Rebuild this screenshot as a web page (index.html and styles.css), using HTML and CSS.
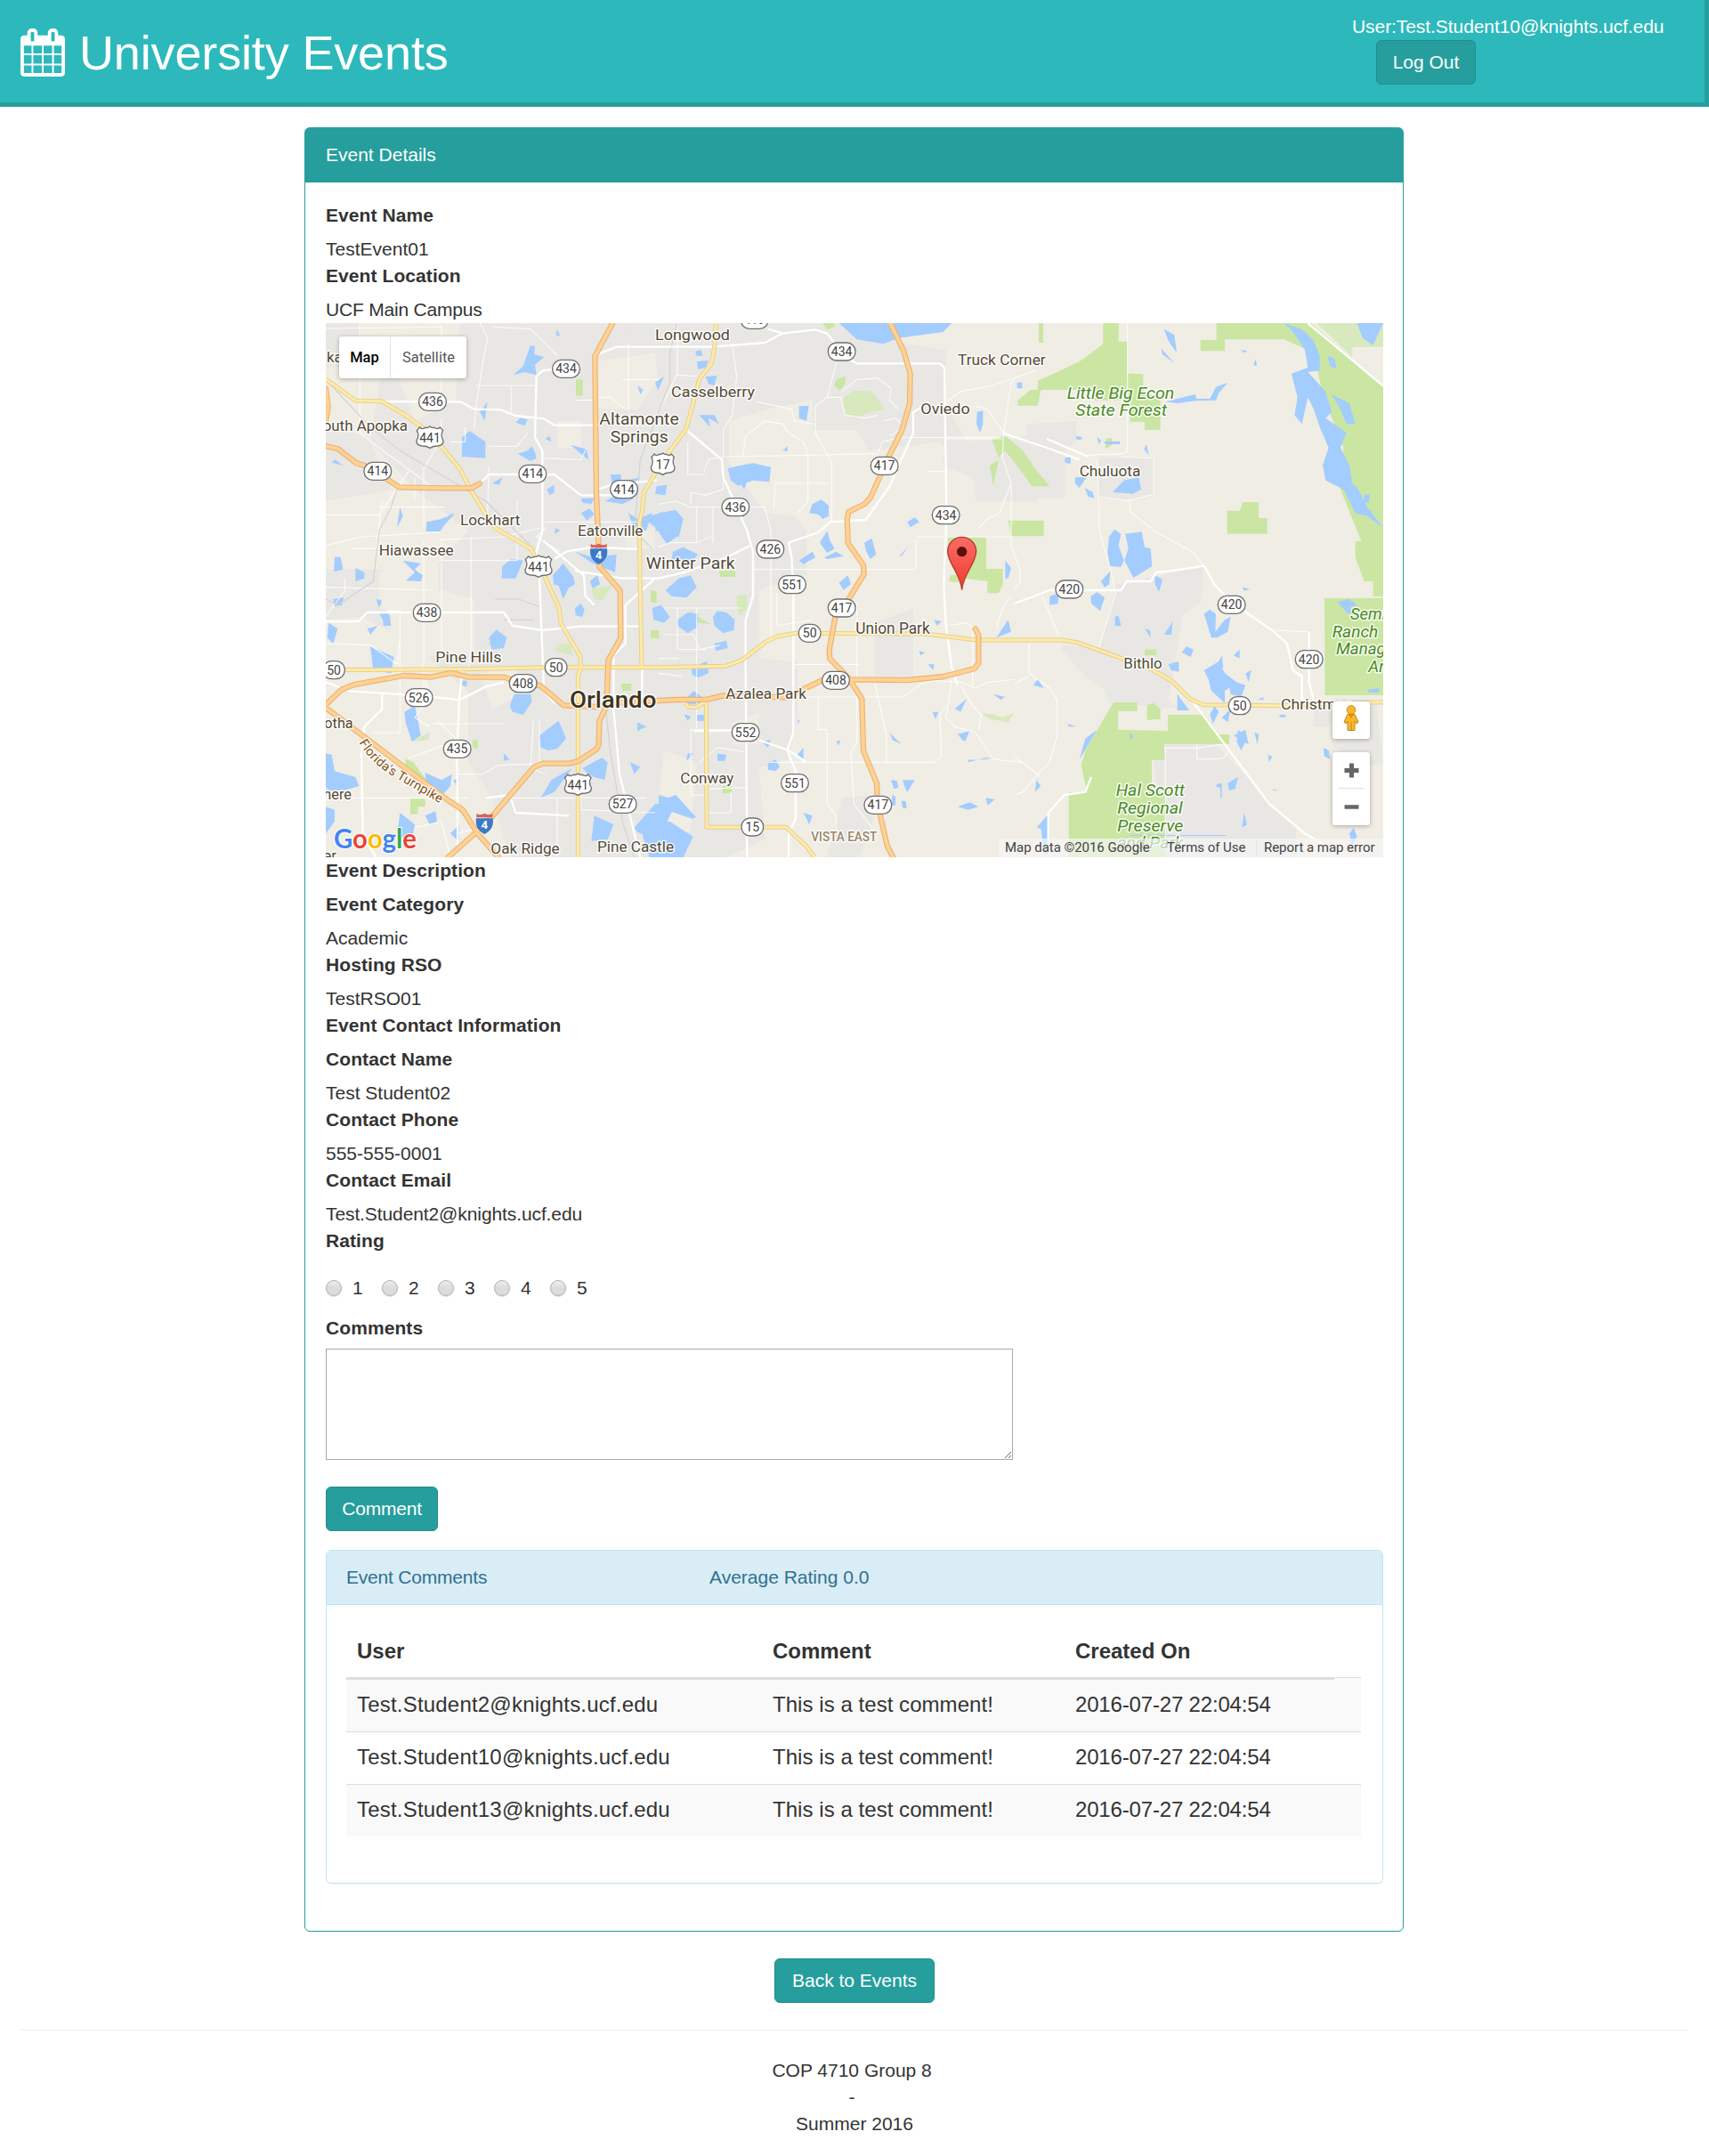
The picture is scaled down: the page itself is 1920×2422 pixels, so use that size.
FILE: index.html
```html
<!DOCTYPE html>
<html lang="en">
<head>
<meta charset="utf-8">
<title>University Events</title>
<link rel="stylesheet" href="styles.css">
</head>
<body>
<header class="topbar">
  <h1 class="brand">
    <svg class="brand-icon" viewBox="64 0 1664 1792" aria-hidden="true"><path fill="currentColor" d="M192 1664h288v-288h-288v288zm352 0h320v-288h-320v288zm-352-352h288v-320h-288v320zm352 0h320v-320h-320v320zm-352-384h288v-288h-288v288zm736 736h320v-288h-320v288zm-384-736h320v-288h-320v288zm768 736h288v-288h-288v288zm-384-352h320v-320h-320v320zm-352-864v-288q0-13-9.500-22.500t-22.500-9.500h-64q-13 0-22.500 9.500t-9.500 22.500v288q0 13 9.500 22.500t22.500 9.500h64q13 0 22.500-9.500t9.500-22.500zm736 864h288v-320h-288v320zm-384-384h320v-288h-320v288zm384 0h288v-288h-288v288zm32-480v-288q0-13-9.500-22.500t-22.500-9.500h-64q-13 0-22.500 9.500t-9.500 22.500v288q0 13 9.500 22.500t22.500 9.500h64q13 0 22.500-9.500t9.500-22.500zm384-64v1280q0 52-38 90t-90 38h-1408q-52 0-90-38t-38-90v-1280q0-52 38-90t90-38h128v-96q0-66 47-113t113-47h64q66 0 113 47t47 113v96h384v-96q0-66 47-113t113-47h64q66 0 113 47t47 113v96h128q52 0 90 38t38 90z"/></svg>
    <span>University Events</span>
  </h1>
  <div class="account">
    <div>User:Test.Student10@knights.ucf.edu</div>
    <button class="btn btn-logout">Log Out</button>
  </div>
</header>

<main>
<section class="panel">
  <div class="panel-heading">Event Details</div>
  <div class="panel-body">
    <div class="label">Event Name</div>
    <div>TestEvent01</div>
    <div class="label">Event Location</div>
    <div class="tight">UCF Main Campus</div>

    <div class="map">
      <svg class="map-canvas" viewBox="0 0 3564 1800" aria-label="Map of Orlando">
        <rect width="3564" height="1800" fill="#f0ede4"/>
        <!-- built-up areas -->
        <g class="urban">
          <path d="M450 0H1750L1960 70L2090 90V280L2180 430L2400 400V600H2190V540L2070 400L1830 430L1790 360H1640V260L1490 290L1360 330V470L1480 640L1580 650L1620 700V850L1460 900V1130L1590 1140V1330L1560 1470L1460 1500L1480 1740L1350 1800H620L560 1600L480 1480V1240L260 1060L120 990L0 1000V830H360L480 700L300 560L150 400L190 140H450Z"/>
          <path d="M0 0H120V150H0ZM0 350L140 380L220 560L0 600ZM850 920H1180V1300H850ZM2360 340L2530 330V400L2490 430V590H2400L2380 500ZM1850 1010L1980 960V1190H1850ZM2090 400L2320 390L2420 360V480L2280 560L2080 480ZM1740 1600L1850 1590V1660L1800 1800H1690Z"/>
          <path d="M2605 450L2790 450V580L2740 597L2600 590ZM2664 880L2960 820L2950 940L2890 980L2840 1270L2880 1300L2640 1280L2620 1230L2560 1190L2480 1100L2485 1085L2606 1095ZM2790 1480L2830 1420H3000L3170 1600L3270 1700V1800H2830ZM3330 1290L3540 1280L3564 1480L3490 1500L3390 1420V1360H3330Z"/>
        </g>
        <g class="rural">
          <path d="M190 0H440V260L300 330L250 200ZM300 760L380 820V960L340 1010L180 960V840ZM390 900L500 930V1120H220V980ZM100 1290L260 1240V1440L460 1530V1650L340 1800H200L60 1500ZM910 130L1110 100L1120 190L1050 290H920ZM520 1180L640 1160V1260L560 1300ZM1140 1440L1250 1480L1230 1700L1180 1800H1100ZM780 330H860V420H780ZM1010 700L1110 690V760H1010ZM1370 1350L1460 1310V1420H1370Z"/>
        </g>
        <!-- parks and preserves -->
        <g class="park">
          <path d="M2400 195L2540 130L2620 70V0H2672V62H2702V170L2755 172V225L2813 260V360H2760V333H2710V260H2590V225H2400ZM2630 388H2650V410L2627 424ZM2332 260L2375 225H2410L2400 278H2332ZM2403 0H2418V66H2403ZM3002 0H3320L3564 212V921H3530V870H3500L3470 790V735H3490L3420 560L3430 420L3360 240L3330 100L3230 55H3030V94H2948V57H3002ZM3038 632L3080 632L3090 603H3144V657H3173V710H3038ZM2310 720L2300 665H2420V718H2310ZM2097 721H2130L2150 760V722H2226V828H2282V880L2268 910H2230V870L2150 860V875L2100 870L2105 850L2150 845V790L2097 750ZM2245 390L2290 380L2350 430L2390 490L2440 550H2380L2330 480L2290 430L2270 450L2250 550L2238 480L2270 460Z"/>
          <path d="M2655 1278H2735V1307H2670V1370L2838 1375V1320H2960L3010 1386H3045V1418H2826L2827 1472H2784V1585H2830V1800H2504V1582H2566L2546 1490L2560 1440ZM2768 1288L2790 1280L2813 1300V1335L2768 1337ZM2760 1100H2800V1120H2760ZM3366 927H3564V1254H3368ZM1675 0H1715V12L1690 22ZM1720 190L1750 180L1752 205L1730 228L1714 210ZM843 190H866V245H843ZM268 1465L295 1480L350 1555V1550L268 1510ZM285 1603H335V1630H310V1655H285ZM495 1407L512 1403V1435L495 1430ZM1228 968L1270 1000L1300 1015L1240 1008ZM1337 1560H1367V1585H1337ZM1095 900L1115 905V945L1095 940ZM1325 835H1380V855H1330ZM1095 1035H1123V1063H1095ZM995 1215H1030V1238L1000 1240Z"/>
          <path class="park-light" d="M1742 255L1780 227L1840 230L1885 290L1830 300L1790 320L1750 310ZM1385 918L1420 917V960L1395 985L1385 960ZM780 1085L825 1080L830 1120L775 1105ZM895 895L965 885L930 935L905 930ZM285 1410L350 1380L345 1405ZM2210 1315L2250 1318L2280 1330L2320 1313L2300 1345L2240 1335ZM540 1080L575 1070L575 1100ZM3340 0H3564V80H3460V115Z"/>
        </g>
        <!-- lakes -->
        <g class="water">
          <path d="M1730 0H2110L2080 30L1930 50L1880 70L1790 55ZM1355 490L1395 480L1440 472L1500 485L1495 535L1440 530L1390 548L1365 530ZM632 175L665 145L690 75L705 78L702 105L735 115L705 140L710 175L670 165ZM460 385L485 363L538 400V455L458 450ZM647 440L680 430L695 415L705 435L710 455L690 465ZM825 410L880 425L885 460L860 440ZM595 820L625 795L665 800L640 860L593 860ZM765 850L800 810L835 855L840 880L815 895L768 880ZM1070 655L1130 640L1182 690V720L1150 745L1112 690ZM1122 640L1180 630L1205 660L1190 720L1140 712L1122 690ZM1170 770L1205 755L1255 780L1235 800L1165 800ZM1145 900L1190 860L1230 850L1250 890L1215 925L1165 920ZM1185 1000L1220 975L1255 980L1252 1025L1220 1045L1185 1020ZM1232 1160L1285 1140L1290 1180L1255 1195L1235 1185ZM1220 1260L1240 1240L1275 1265V1285H1220ZM720 1390L785 1340L810 1400L780 1435L750 1440L725 1430ZM620 1290L635 1250H690L695 1275L665 1320L630 1310ZM0 1450L20 1455L30 1510L100 1530L112 1560L60 1575H0ZM335 1515L390 1540L425 1520L420 1560L385 1600L340 1570ZM1122 1590L1155 1600L1180 1590L1248 1665L1235 1670L1160 1645L1122 1675ZM1122 1675L1160 1680L1238 1730L1205 1800H1090L1060 1700ZM1040 1700L1110 1620L1180 1620L1120 1740L1050 1715ZM905 1660L970 1690L950 1740L895 1745ZM865 1500L930 1465L950 1480L940 1540L905 1530L885 1520ZM265 1310L300 1290L310 1335L320 1390L290 1410L270 1350ZM1320 970L1350 975L1378 1000L1375 1035L1340 1045L1310 1020L1305 990ZM1310 1080L1350 1070L1355 1095L1315 1105ZM2640 720L2658 695L2680 710L2672 750L2690 800L2680 822L2642 818L2635 770ZM2695 710L2750 703L2760 755L2780 760L2785 820L2722 858L2692 800L2705 760ZM2652 570L2690 530L2740 520L2748 560L2720 575ZM340 670L380 662L432 645L400 680L385 702H338ZM30 788H50L58 830L27 838ZM100 825L130 840V860L100 870ZM260 800L320 810L300 830L327 850L320 870L270 868L300 840ZM2578 920L2600 907L2625 925L2610 970L2580 945ZM2440 920L2470 910L2468 945L2440 950Z"/>
          <path d="M3230 0L3290 20L3330 60L3350 110V160L3310 165L3370 230L3390 300L3370 320L3440 370L3420 420L3450 480L3460 540L3480 560L3510 620L3564 690L3510 650L3470 640L3430 560L3370 530L3360 480L3380 420L3350 350L3330 290L3310 250L3290 340L3265 310L3275 250L3255 170L3310 150L3300 90L3260 30ZM3376 110L3400 120L3408 155L3385 145ZM3390 240L3450 270L3470 340H3440L3420 290ZM3500 580L3520 575L3515 605L3500 605ZM3475 0H3564L3545 40L3530 75L3495 50ZM2825 20L2860 40L2868 100L2840 60ZM2815 85L2860 135L2820 105ZM2830 265L2930 240L2935 255L2980 255L3000 215L3040 200L3010 235L3000 260L2930 262L2870 270ZM3078 90L3105 93L3100 100ZM3134 120L3138 145L3127 142ZM2620 400L2676 398V408H2630ZM2600 385L2614 395L2605 408ZM2528 380L2550 385L2545 393L2530 392ZM2766 408L2774 445L2758 425ZM2490 455L2510 450V475L2492 470ZM2525 520L2565 518L2540 555L2525 540ZM2558 555L2585 570L2590 590L2570 585ZM2613 870L2645 835L2640 880L2625 890ZM2795 850L2820 865L2808 905L2795 880ZM3090 890L3115 897L3095 902Z"/>
          <path d="M2960 980L2980 965L3000 980L2998 1040L3030 1000L3050 990L3040 1040L3005 1060L2985 1060ZM2885 1110L2900 1090L2925 1100L2915 1125ZM2840 1150L2875 1140V1175L2850 1170ZM2960 1170L3010 1140L3030 1180L3070 1210L3030 1240L3030 1280L2985 1240L2975 1200ZM3040 1200L3100 1220L3085 1260L3050 1250ZM2995 1290L3010 1310L2990 1350L2980 1320ZM2825 1050L2855 1005L2850 1050ZM2660 990L2672 985L2680 1020L2660 1020ZM2760 1030L2778 1035L2780 1060ZM2420 1780L2410 1700L2435 1670V1800ZM2396 1700L2435 1655V1710ZM3095 1650L3105 1690L3088 1700ZM3363 1430L3380 1440L3385 1470L3365 1460ZM3410 940L3450 930L3475 950L3450 960L3470 985L3440 975ZM3510 1235L3550 1230V1245L3515 1245ZM3040 1550L3075 1530L3065 1570L3045 1575ZM3020 1600H3015V1565L3002 1562V1555L3020 1550ZM3450 1720L3465 1700L3475 1730L3460 1770ZM2710 1725H3035V1728H2710ZM2870 1250L2910 1305H2870ZM3075 1370L3105 1400L3085 1440L3070 1410ZM1410 560L1400 545L1420 535ZM1640 610L1670 595L1695 615V650L1675 660L1660 645L1630 640ZM1665 740L1690 700L1700 735L1715 760L1690 775ZM1680 790L1720 770L1745 785L1690 795ZM1595 800L1640 770L1650 790L1610 812ZM1730 875L1760 850L1770 880L1745 900ZM1815 740L1840 725L1855 780L1835 795L1822 770ZM1960 670L1985 655L2000 670L1970 688ZM2195 300L2215 295L2215 340L2205 370L2193 340ZM1595 280L1628 278L1620 330L1595 320ZM1540 430L1556 415V432ZM1258 310H1310L1325 340L1290 320L1295 350ZM1280 180L1318 177L1310 210L1290 205ZM1250 130L1290 125L1280 150L1255 155ZM1245 95L1265 90L1270 110H1250ZM2290 800L2310 825L2300 860H2290ZM2330 200H2347V220H2330Z"/>
          <path id="ponds" d="M520 300L545 265L535 330ZM655 320L680 325L670 345L640 335ZM770 710L790 700L775 690ZM860 590L905 590L895 610L865 605ZM970 560L1010 530L1060 520L1020 555L990 580ZM960 510L995 510V540L965 545ZM1115 550L1150 545L1145 580L1110 575ZM560 540L595 520L585 545ZM25 930L60 925L55 950L30 955ZM170 930L190 935L180 960ZM190 985L215 985L220 1020L195 1020ZM140 1030L175 1020L150 1050ZM150 1090L230 1125L220 1180L160 1170ZM10 1010L40 1030L25 1080L5 1060ZM460 1205L475 1205V1225L460 1220ZM1490 1485L1515 1470L1530 1495L1515 1510L1490 1505ZM1470 1410L1500 1405L1490 1430ZM1320 1450L1350 1455L1345 1475H1320ZM1240 1450L1215 1475L1220 1450ZM1208 1318L1230 1325L1220 1340ZM1250 1320H1275V1340H1250ZM1905 1540L1925 1542L1930 1565L1915 1570ZM1945 1540H1985L1960 1580L1950 1560ZM1910 1590L1920 1595V1625L1905 1625ZM1940 1610L1955 1612L1958 1635L1945 1635ZM2130 1630L2170 1615L2200 1630L2165 1640ZM2225 1600L2255 1605L2230 1625ZM2130 1385L2170 1375L2155 1410L2145 1405ZM2120 1300L2160 1265L2140 1310ZM2165 1480L2225 1465H2245L2225 1470L2165 1472ZM2250 1250L2290 1260L2275 1270ZM2045 1310L2065 1310L2055 1335ZM1900 1380L1940 1420L1910 1405ZM1585 1460L1610 1430V1470ZM1590 1340L1600 1335L1590 1350ZM1720 1410L1735 1405L1728 1425ZM1610 1650L1640 1660L1630 1690ZM2030 1150L2050 1150L2048 1170ZM2000 1105L2020 1110L2005 1120ZM2260 1060L2300 1000L2310 1040ZM2050 1000L2075 1005L2060 1020ZM1930 790L1960 755L1945 780ZM2385 1220L2400 1200L2420 1230ZM2395 1540L2410 1560L2390 1580ZM2560 1400L2600 1370L2540 1470ZM2710 1380L2722 1395L2712 1405ZM2500 1350L2530 1360H2505ZM3060 1390L3100 1370L3110 1420ZM3020 1330L3050 1300L3040 1345ZM3140 1270L3160 1260V1270ZM3000 1160L3020 1120L3025 1160ZM3060 1120L3080 1100V1130ZM3100 1180L3120 1170L3110 1210ZM3130 1380L3145 1385L3140 1420ZM3175 1455L3190 1460L3180 1480ZM3190 1570L3210 1575H3195ZM3215 1320H3235V1328H3215ZM740 390L755 380L760 400ZM430 640L410 650H430ZM60 480L20 470L30 460ZM250 620L260 650L240 690ZM780 20L790 45L775 40ZM1040 50L1010 20L1030 40ZM1110 200L1140 180L1120 225ZM1050 210L1070 225L1060 240Z"/>
          <path d="M550 1060L575 1033L610 1060L600 1095L560 1100ZM1100 960L1130 950L1160 990L1140 1010L1105 1000ZM840 960L860 945L872 965L865 990L842 985ZM890 870L915 850L925 880L900 895ZM780 870H830L800 930L790 900ZM860 640L890 625L905 645L880 665ZM745 560L770 545L770 570L755 580ZM940 600L980 580L1040 590L1000 610ZM1020 640L1050 660L1100 640L1080 700L1040 700ZM840 770L900 790L980 780L975 840L900 810ZM1110 700L1122 640L1150 700ZM180 980L215 975L200 1010ZM760 1540L830 1500L770 1580L725 1600ZM430 1540L450 1535L440 1560ZM600 1450L620 1470L600 1475ZM1025 1480L1060 1495L1040 1520ZM250 1650L300 1690L290 1740L240 1730ZM335 1660L370 1645L375 1680L350 1690ZM420 1720L450 1690V1750ZM0 1630L30 1640V1680L0 1720ZM1050 1345L1080 1360L1050 1375Z"/>
        </g>
        <!-- streets -->
        <g class="street">
          <path d="M0 18L260 15L390 12V220L360 290M115 0V370L180 420L370 560M520 0L545 50L530 130L505 290L500 360M560 12L690 20L780 110M505 210H705M625 210V300M390 320L385 400L330 490V690M470 350V400H420M0 646H180L280 500M190 600L170 760L90 760M300 520V590M180 620H400M550 415H645L680 370M550 480L545 640M645 600V800H390M0 750L120 720L385 705M390 730L600 720L720 690M735 455L860 460L880 420M740 670L1060 670M740 690L710 720L790 770M845 260H905M1020 70V300M1000 190H1122M910 250H960L1010 290M330 730V1220L345 1300M490 720V1090L480 1170M390 730V1100M0 1080L150 1085L240 1150L250 1060M0 890L360 900M65 860V900L0 990M210 970H250V1380H150M375 1340L440 1400L380 1430L270 1470M360 1350L600 1350M350 1360L300 1330L350 1260L330 1180M440 1520L530 1520L580 1490L860 1480M720 1340V1480M700 1340L690 1500L740 1520M0 1600H480M630 1600H1080M780 1600V1800M860 1570V1640L1110 1650M300 1700L390 1680L420 1800M440 1720L520 1700"/>
          <path d="M1185 0V170L1122 300M1185 175L1260 180M1370 70L1385 180L1370 310L1340 360L1340 450M1220 400V510H1280M1275 500L1290 460L1340 450L1620 445L1860 440L1875 400L1940 385H2275M1450 265L1500 275L1570 290L1580 330L1645 340M1650 340L1650 370L1705 470V670M1722 130L1690 250L1650 280L1650 360M1405 450L1415 380L1480 330L1540 340L1560 370L1610 400L1625 440V600L1590 640M1510 630L1515 540H1700M1340 520V560L1280 580L1230 570L1230 610M1122 610L1180 600L1230 620H1480L1500 700V1060M1122 755L1160 740L1250 740L1300 720M1250 620V740M1305 620L1305 740M1440 830H1990M1990 730V830M1990 720H2310M1740 230L1790 190L1860 185L1905 220L1900 260L1930 290M1735 250L1750 310L1820 320L1860 310M1690 250L1740 250M1880 330L1920 320L1950 350L1900 380M2200 690L2230 660L2270 640L2310 540L2280 450L2285 370L2310 200L2322 190M2310 540L2310 750L2340 830V870L2322 900M2085 270L2140 230L2250 210L2390 160M2030 500L2090 500M2085 390H2280M2190 280L2230 290L2285 370M2560 450L2565 445L2690 440M2680 450L2790 455M2790 450V577L2740 590L2700 598L2605 585M2710 600V635L2800 705L2920 770L2960 820M2600 460L2607 700L2650 850L2662 910L2605 1095M2702 0V430L2690 440"/>
          <path d="M1140 960H1400M1185 960V1100L1280 1100M1122 1180L1200 1190M1250 960V1370M1140 1050H1240L1260 1100L1330 1085M1122 1130H1190M1230 1370H1420M1230 1370V1590H1280M1260 1480L1320 1430L1410 1445M1280 1570L1420 1565M1280 1650H1366V1580M1520 910V1020L1640 1000M1580 1150H1800M1520 1260H1945L2010 1215L2050 1205L2140 1210L2190 1230L2230 1210L2322 1200M1660 1260V1370H1690V1620L1720 1660V1720M1790 940V1410L1770 1450L1780 1620L1840 1700M1850 1210L1870 1300L1890 1390V1480H2050L2075 1460L2070 1320L2090 1290M1500 1480H2040M2110 1200L2090 1330L2120 1360L2190 1380L2250 1470L2350 1480L2410 1530M2140 1220L2180 1290L2210 1320L2200 1370M2090 1020L2160 1010L2190 1030M2310 920L2280 960L2260 1030M2180 1030V1220M2370 1080V1180L2440 1230L2465 1270V1390L2440 1480L2400 1520L2350 1580L2322 1590M2322 1215L2370 1190M2322 1460L2400 1520M2415 920L2440 980L2470 1055M2826 1432H2936L3020 1420M2936 1420V1470L3020 1468L3040 1450M2830 1432V1740M3200 1035L3310 1040"/>
        </g>
        <g class="rail"><path d="M0 190L150 350L250 430L540 600L660 720L700 760M300 550L240 560L220 620L180 700L160 870L40 950L0 930M1185 0L1160 100V200L1122 300L1060 460L1040 700L1100 760M940 1270L960 1450L1000 1680L1040 1800M570 930H650L730 960M600 1000H700"/></g>
        <g class="avenue">
          <path d="M180 264L455 265L500 290L590 292L640 312L735 322L770 344L905 344M905 110L980 80H1300L1480 66L1540 34M860 145L730 160L710 180L705 385L730 430V700L710 770L720 860L730 1100L735 1240L770 1280M520 540L550 510H770L860 580L985 580M920 560L960 545L1115 530M735 735L870 850L875 920L905 950M770 795L810 770L900 755L1050 762M840 835L1000 860L1122 860L1210 840L1350 790L1430 750M0 1005H110L140 975H600L630 1020L730 1035L860 1022L1060 1022M1110 860L1010 950V1080L970 1120V1300L990 1520L1060 1800M1066 1160V1280M0 1210L80 1240L320 1255L450 1270L540 1225L600 1210M460 1170L450 1270L442 1440L445 1760M190 1250V1300L130 1360L120 1450L125 1730L170 1800M540 1600L620 1590L640 1650L820 1660"/>
          <path d="M1490 20L1540 34L1650 22L1690 35L1720 75M1740 110L1790 136H2070L2085 150L2092 650L2083 880L2090 1020L2110 1160L2130 1220M2015 280L1980 300V370L1900 550L1820 663L1700 670L1660 705L1560 740L1570 790L1576 900V1380L1555 1440L1584 1510V1670L1560 1720V1800M1215 360L1335 460L1340 520L1420 700L1440 770V920L1415 1000V1150L1420 1800M1460 1405L1560 1440L1620 1480M2430 390L2570 450M2280 370L2430 420L2540 460M2322 945L2440 900L2680 900L2700 870L2780 870L2800 840L2870 832L2960 818L2995 880L3050 940L3190 1035L3240 1080L3260 1170L3290 1190V1270M3314 1040V1210L3335 1290M3310 0L3564 212M2918 1270L3180 1620L3300 1720L3400 1780M1240 1375L1400 1373M2435 1800V1650L2490 1590L2560 1580L2580 1530"/>
        </g>
        <!-- US and state highways -->
        <defs><path id="highways" d="M0 189L100 261L187 263L262 306L352 371L452 491L482 551L537 641L572 691L692 761L722 821L787 961L792 1011L857 1121L860 1161L850 1191V1800M1315 0L1310 81L1300 136L1260 186L1227 311L1212 361L1137 461L1072 571L1067 631L1057 671L1060 921L1065 1158M0 1169L462 1166L742 1160H1122L1347 1156L1402 1136L1487 1071L1522 1056L1582 1045L2022 1047L2192 1068L2482 1068L2532 1076L2692 1133L2782 1166L2852 1206L2912 1266L2957 1286L3212 1289L3564 1277M1212 1281L1222 1293L1247 1295L1282 1273L1284 1699H1552L1622 1766L1647 1800"/></defs>
        <use href="#highways" class="highway-case"/><use href="#highways" class="highway"/>
        <!-- expressways -->
        <defs><path id="express" d="M967 0L907 111L912 571L920 761L922 821L992 901L994 1061L952 1136L946 1291L922 1341L920 1421L912 1436L852 1476L822 1484H732L702 1496L562 1661L507 1716L412 1800M0 414L40 423L102 471L132 481L207 526L247 553L402 556H492L519 541M0 221L8 281L0 331M0 1286L52 1236L92 1219L262 1188L352 1193L422 1179L482 1193H602L662 1216L722 1221L802 1288L912 1293L952 1281L1182 1269L1287 1268L1337 1256L1552 1261L1672 1204L1762 1201L1962 1203L2082 1191L2187 1164L2200 1146V1051L2189 1031M0 1296L92 1366L402 1601L462 1641L512 1721L582 1800M1902 0L1947 91L1970 171L1968 271L1942 361L1897 451L1837 586L1817 609L1762 636L1757 661L1760 741L1812 816L1814 846L1762 931L1717 991L1697 1101L1699 1131L1762 1196L1807 1266L1812 1441L1857 1551L1860 1621L1892 1761L1912 1800"/></defs>
        <use href="#express" class="express-case"/><use href="#express" class="express"/>

        <!-- route shields -->
        <g class="shields">
          <g transform="translate(810 154)"><rect x="-46" y="-30" width="92" height="60" rx="29"/><text y="15">434</text></g>
          <g transform="translate(360 265)"><rect x="-46" y="-30" width="92" height="60" rx="29"/><text y="15">436</text></g>
          <g transform="translate(175 499)"><rect x="-46" y="-30" width="92" height="60" rx="29"/><text y="15">414</text></g>
          <g transform="translate(697 508)"><rect x="-46" y="-30" width="92" height="60" rx="29"/><text y="15">414</text></g>
          <g transform="translate(1005 560)"><rect x="-46" y="-30" width="92" height="60" rx="29"/><text y="15">414</text></g>
          <g transform="translate(1445 -11)"><rect x="-46" y="-30" width="92" height="60" rx="29"/><text y="15">419</text></g>
          <g transform="translate(1739 96)"><rect x="-46" y="-30" width="92" height="60" rx="29"/><text y="15">434</text></g>
          <g transform="translate(1883 481)"><rect x="-46" y="-30" width="92" height="60" rx="29"/><text y="15">417</text></g>
          <g transform="translate(1381 620)"><rect x="-46" y="-30" width="92" height="60" rx="29"/><text y="15">436</text></g>
          <g transform="translate(2090 647)"><rect x="-46" y="-30" width="92" height="60" rx="29"/><text y="15">434</text></g>
          <g transform="translate(1498 762)"><rect x="-46" y="-30" width="92" height="60" rx="29"/><text y="15">426</text></g>
          <g transform="translate(1572 881)"><rect x="-46" y="-30" width="92" height="60" rx="29"/><text y="15">551</text></g>
          <g transform="translate(1739 960)"><rect x="-46" y="-30" width="92" height="60" rx="29"/><text y="15">417</text></g>
          <g transform="translate(2506 897)"><rect x="-46" y="-30" width="92" height="60" rx="29"/><text y="15">420</text></g>
          <g transform="translate(3053 949)"><rect x="-46" y="-30" width="92" height="60" rx="29"/><text y="15">420</text></g>
          <g transform="translate(3314 1133)"><rect x="-46" y="-30" width="92" height="60" rx="29"/><text y="15">420</text></g>
          <g transform="translate(341 976)"><rect x="-46" y="-30" width="92" height="60" rx="29"/><text y="15">438</text></g>
          <g transform="translate(27 1169)"><rect x="-37" y="-30" width="74" height="60" rx="29"/><text y="15">50</text></g>
          <g transform="translate(776 1160)"><rect x="-37" y="-30" width="74" height="60" rx="29"/><text y="15">50</text></g>
          <g transform="translate(1631 1045)"><rect x="-37" y="-30" width="74" height="60" rx="29"/><text y="15">50</text></g>
          <g transform="translate(3080 1289)"><rect x="-37" y="-30" width="74" height="60" rx="29"/><text y="15">50</text></g>
          <g transform="translate(1438 1698)"><rect x="-37" y="-30" width="74" height="60" rx="29"/><text y="15">15</text></g>
          <g transform="translate(665 1214)"><rect x="-46" y="-30" width="92" height="60" rx="29"/><text y="15">408</text></g>
          <g transform="translate(314 1262)"><rect x="-46" y="-30" width="92" height="60" rx="29"/><text y="15">526</text></g>
          <g transform="translate(443 1435)"><rect x="-46" y="-30" width="92" height="60" rx="29"/><text y="15">435</text></g>
          <g transform="translate(1719 1204)"><rect x="-46" y="-30" width="92" height="60" rx="29"/><text y="15">408</text></g>
          <g transform="translate(1415 1379)"><rect x="-46" y="-30" width="92" height="60" rx="29"/><text y="15">552</text></g>
          <g transform="translate(1581 1550)"><rect x="-46" y="-30" width="92" height="60" rx="29"/><text y="15">551</text></g>
          <g transform="translate(1861 1624)"><rect x="-46" y="-30" width="92" height="60" rx="29"/><text y="15">417</text></g>
          <g transform="translate(1001 1621)"><rect x="-46" y="-30" width="92" height="60" rx="29"/><text y="15">527</text></g>
          <g transform="translate(351 386)"><path d="M-34-35Q-26-26-15-34Q-7-32 0-38Q7-32 15-34Q26-26 34-35L44-24Q34-8 45 10Q46 26 26 28Q10 28 0 35Q-10 28-26 28Q-46 26-45 10Q-34-8-44-24Z"/><text y="15">441</text></g>
          <g transform="translate(717 821)"><path d="M-34-35Q-26-26-15-34Q-7-32 0-38Q7-32 15-34Q26-26 34-35L44-24Q34-8 45 10Q46 26 26 28Q10 28 0 35Q-10 28-26 28Q-46 26-45 10Q-34-8-44-24Z"/><text y="15">441</text></g>
          <g transform="translate(850 1556)"><path d="M-34-35Q-26-26-15-34Q-7-32 0-38Q7-32 15-34Q26-26 34-35L44-24Q34-8 45 10Q46 26 26 28Q10 28 0 35Q-10 28-26 28Q-46 26-45 10Q-34-8-44-24Z"/><text y="15">441</text></g>
          <g transform="translate(1136 476)"><path d="M-29-35Q-22-26-13-34Q-6-32 0-38Q6-32 13-34Q22-26 29-35L38-24Q30-8 40 10Q40 26 22 28Q10 28 0 35Q-10 28-22 28Q-40 26-40 10Q-30-8-38-24Z"/><text y="15">17</text></g>
        </g>
        <g class="interstate">
          <g transform="translate(920 778)"><path class="i-blue" d="M-28-18H28Q34 18 0 35Q-34 18-28-18Z"/><path class="i-red" d="M-27-35Q-18-26 0-35Q18-26 27-35V-21H-27Z"/><text y="17">4</text></g>
          <g transform="translate(535 1687)"><path class="i-blue" d="M-28-18H28Q34 18 0 35Q-34 18-28-18Z"/><path class="i-red" d="M-27-35Q-18-26 0-35Q18-26 27-35V-21H-27Z"/><text y="17">4</text></g>
        </g>

        <!-- place names -->
        <g class="places">
          <text x="3" y="131">ka</text>
          <text x="-10" y="364" textLength="286" lengthAdjust="spacingAndGlyphs">outh Apopka</text>
          <text x="1110" y="58" textLength="252" lengthAdjust="spacingAndGlyphs">Longwood</text>
          <text x="1164" y="248" textLength="282" lengthAdjust="spacingAndGlyphs">Casselberry</text>
          <text class="mid" x="922" y="342" textLength="268" lengthAdjust="spacingAndGlyphs">Altamonte</text>
          <text class="mid" x="959" y="401" textLength="195" lengthAdjust="spacingAndGlyphs">Springs</text>
          <text x="453" y="681" textLength="202" lengthAdjust="spacingAndGlyphs">Lockhart</text>
          <text x="179" y="783" textLength="252" lengthAdjust="spacingAndGlyphs">Hiawassee</text>
          <text x="849" y="717" textLength="220" lengthAdjust="spacingAndGlyphs">Eatonville</text>
          <text class="mid" x="1079" y="829" textLength="300" lengthAdjust="spacingAndGlyphs">Winter Park</text>
          <text x="2130" y="141" textLength="296" lengthAdjust="spacingAndGlyphs">Truck Corner</text>
          <text x="2005" y="306" textLength="166" lengthAdjust="spacingAndGlyphs">Oviedo</text>
          <text x="2540" y="516" textLength="206" lengthAdjust="spacingAndGlyphs">Chuluota</text>
          <text x="370" y="1143" textLength="222" lengthAdjust="spacingAndGlyphs">Pine Hills</text>
          <text x="-5" y="1365" textLength="97" lengthAdjust="spacingAndGlyphs">otha</text>
          <text x="-8" y="1606" textLength="95" lengthAdjust="spacingAndGlyphs">here</text>
          <text x="-8" y="1812">er</text>
          <text class="city" x="822" y="1295" textLength="292" lengthAdjust="spacingAndGlyphs">Orlando</text>
          <text x="556" y="1788" textLength="232" lengthAdjust="spacingAndGlyphs">Oak Ridge</text>
          <text x="915" y="1781" textLength="258" lengthAdjust="spacingAndGlyphs">Pine Castle</text>
          <text x="1348" y="1265" textLength="272" lengthAdjust="spacingAndGlyphs">Azalea Park</text>
          <text class="mid" x="1786" y="1048" textLength="250" lengthAdjust="spacingAndGlyphs">Union Park</text>
          <text x="1195" y="1551" textLength="180" lengthAdjust="spacingAndGlyphs">Conway</text>
          <text class="hood" x="1636" y="1746" textLength="222" lengthAdjust="spacingAndGlyphs">VISTA EAST</text>
          <text x="2689" y="1165" textLength="130" lengthAdjust="spacingAndGlyphs">Bithlo</text>
          <text x="3219" y="1302" textLength="243" lengthAdjust="spacingAndGlyphs">Christmas</text>
        </g>
        <g class="park-names">
          <text x="2498" y="254" textLength="362" lengthAdjust="spacingAndGlyphs">Little Big Econ</text>
          <text x="2527" y="312" textLength="308" lengthAdjust="spacingAndGlyphs">State Forest</text>
          <text x="3453" y="1000" textLength="222" lengthAdjust="spacingAndGlyphs">Seminole</text>
          <text x="3392" y="1058" textLength="155" lengthAdjust="spacingAndGlyphs">Ranch</text>
          <text x="3405" y="1117">Manage</text>
          <text x="3514" y="1175">Area</text>
          <text x="2663" y="1594" textLength="232" lengthAdjust="spacingAndGlyphs">Hal Scott</text>
          <text x="2668" y="1653" textLength="220" lengthAdjust="spacingAndGlyphs">Regional</text>
          <text x="2668" y="1712" textLength="222" lengthAdjust="spacingAndGlyphs">Preserve</text>
          <text x="2668" y="1769" textLength="222" lengthAdjust="spacingAndGlyphs">and Park</text>
        </g>
        <path id="turnpike" d="M112 1414Q150 1480 225 1526L405 1630" fill="none"/>
        <text class="road-name"><textPath href="#turnpike" textLength="345">Florida's Turnpike</textPath></text>

        <!-- event pin -->
        <defs><linearGradient id="pin" x1="0" y1="0" x2="0" y2="1"><stop offset="0" stop-color="#fa6d66"/><stop offset="1" stop-color="#f03a2e"/></linearGradient></defs>
        <path d="M2144 899C2140 845 2096 810 2096 769A48 48 0 0 1 2192 769C2192 810 2148 845 2144 899Z" fill="url(#pin)" stroke="#b93a32" stroke-width="4"/>
        <circle cx="2144" cy="770" r="17" fill="#5b120e"/>
      </svg>

      <div class="map-types"><span class="map-type active">Map</span><span class="map-type">Satellite</span></div>
      <svg class="google-logo" viewBox="0 0 100 38" aria-label="Google"><text x="2" y="28" textLength="93" lengthAdjust="spacingAndGlyphs"><tspan fill="#4285f4">G</tspan><tspan fill="#ea4335">o</tspan><tspan fill="#fbbc05">o</tspan><tspan fill="#4285f4">g</tspan><tspan fill="#34a853">l</tspan><tspan fill="#ea4335">e</tspan></text></svg>
      <div class="map-controls">
        <div class="control-box pegman">
          <svg viewBox="0 0 18 30" width="18" height="30"><path d="M5 10.500H13L17 19L15 21L13 18V28.500H5V18L3 21L1 19Z" fill="#fbb829" stroke="#b8861e"/><path d="M6 10.500H12L9 15Z" fill="#e8891c"/><path d="M9 19V28" stroke="#b8861e"/><circle cx="9" cy="5.500" r="4.800" fill="#fbb829" stroke="#c98e1b"/></svg>
        </div>
        <div class="control-box zoom">
          <svg viewBox="0 0 42 41" width="42" height="41"><path d="M13.500 20.500H29.500M21.500 12.500V28.500" stroke="#666" stroke-width="5"/></svg>
          <hr>
          <svg viewBox="0 0 42 41" width="42" height="41"><path d="M13.500 20.500H29.500" stroke="#666" stroke-width="4.500"/></svg>
        </div>
      </div>
      <div class="map-credits"><span>Map data ©2016 Google</span><span>Terms of Use</span><span>Report a map error</span></div>
    </div>

    <div class="label">Event Description</div>
    <div class="label">Event Category</div>
    <div>Academic</div>
    <div class="label">Hosting RSO</div>
    <div>TestRSO01</div>
    <div class="label">Event Contact Information</div>
    <div class="label">Contact Name</div>
    <div>Test Student02</div>
    <div class="label">Contact Phone</div>
    <div>555-555-0001</div>
    <div class="label">Contact Email</div>
    <div class="email">Test.Student2@knights.ucf.edu</div>
    <div class="label">Rating</div>
    <div class="ratings">
      <label class="rating"><input type="radio" name="rating">1</label>
      <label class="rating"><input type="radio" name="rating">2</label>
      <label class="rating"><input type="radio" name="rating">3</label>
      <label class="rating"><input type="radio" name="rating">4</label>
      <label class="rating"><input type="radio" name="rating">5</label>
    </div>
    <div class="label">Comments</div>
    <textarea class="comment-box" aria-label="Comments"></textarea>
    <button class="btn btn-comment">Comment</button>

    <section class="comments">
      <div class="comments-heading"><span class="tight">Event Comments</span><span>Average Rating 0.0</span></div>
      <table class="comments-table">
        <colgroup><col class="col-user"><col class="col-comment"><col class="col-created"><col></colgroup>
        <thead><tr><th>User</th><th>Comment</th><th>Created On</th><td></td></tr></thead>
        <tbody>
          <tr><td>Test.Student2@knights.ucf.edu</td><td>This is a test comment!</td><td>2016-07-27 22:04:54</td><td></td></tr>
          <tr><td>Test.Student10@knights.ucf.edu</td><td>This is a test comment!</td><td>2016-07-27 22:04:54</td><td></td></tr>
          <tr><td>Test.Student13@knights.ucf.edu</td><td>This is a test comment!</td><td>2016-07-27 22:04:54</td><td></td></tr>
        </tbody>
      </table>
    </section>
  </div>
</section>
<button class="btn btn-back">Back to Events</button>
</main>

<footer class="footer">
  <div>COP 4710 Group 8&nbsp;</div>
  <div>-&nbsp;</div>
  <div>Summer 2016</div>
</footer>
</body>
</html>
```
FILE: styles.css
```css
* { box-sizing: border-box; }
body {
  margin: 0;
  background: #fff;
  color: #333;
  font: 21px/30px "Liberation Sans", Arial, sans-serif;
}

/* top bar */
.topbar {
  display: flex;
  justify-content: space-between;
  height: 120px;
  padding-left: 23px;
  background: #2db9bb;
  border: solid #269e9d;
  border-width: 0 5px 5px 0;
  color: #fff;
}
.brand {
  display: flex;
  align-items: flex-start;
  gap: 16px;
  margin: 0;
  padding-top: 30px;
  font-size: 54px;
  font-weight: 400;
  line-height: 59px;
  letter-spacing: -.15px;
}
.brand-icon { width: 50px; height: 54px; margin-top: 2px; }
.account { width: 396px; padding-top: 15px; letter-spacing: -.07px; }
.btn {
  display: block;
  height: 50px;
  padding: 0 16px;
  background: #269e9d;
  border: 1px solid #238c8c;
  border-radius: 6px;
  color: #fff;
  font: inherit;
  white-space: nowrap;
}
.btn-logout { width: 112px; margin-left: 27px; }
.btn-comment { width: 126px; letter-spacing: -.2px; }

/* event panel */
.panel {
  width: 1235px;
  height: 2027px;
  margin: 23px 0 0 342px;
  border: 1px solid #269e9d;
  border-radius: 6px;
  box-shadow: 0 1px 1px rgba(0,0,0,.05);
}
.panel-heading {
  height: 61px;
  padding: 15px 23px;
  background: #269e9d;
  color: #fff;
  border-radius: 4px 4px 0 0;
}
.panel-body { padding: 22px 22px 0 23px; }
.label { margin-bottom: 8px; font-weight: 700; letter-spacing: .08px; }
.tight { letter-spacing: -.2px; }
.email { letter-spacing: -.1px; }

/* map */
.map {
  position: relative;
  height: 600px;
  overflow: hidden;
  font-family: Roboto, sans-serif;
}
.map-canvas { display: block; width: 1188px; height: 600px; }
.urban { fill: #e8e7e4; }
.rural { fill: #f0ede4; }
.park { fill: #cae6a2; }
.park-light { fill: #d7e9bd; }
.water { fill: #a3ccff; }
.street, .avenue, .rail, .highway, .highway-case { fill: none; stroke-linejoin: round; }
.street { stroke: #fff; stroke-width: 3.5; opacity: .8; }
.avenue { stroke: #fff; stroke-width: 7; }
.rail { stroke: #d2d2d2; stroke-width: 3.5; }
.highway-case { stroke: #e6d08f; stroke-width: 15; }
.highway { stroke: #feeaa8; stroke-width: 9; }
.express-case, .express { fill: none; stroke-linejoin: round; stroke-linecap: round; }
.express-case { stroke: #e9b573; stroke-width: 19; }
.express { stroke: #ffd195; stroke-width: 12; }
.shields rect, .shields path { fill: #fff; stroke: #707070; stroke-width: 4; }
.shields text, .interstate text { font-size: 42px; font-weight: 400; fill: #444; text-anchor: middle; }
.interstate .i-blue { fill: #3b79c9; }
.interstate .i-red { fill: #da5f5b; }
.interstate text { fill: #fff; font-size: 40px; font-weight: 700; }
.places text, .park-names text, .road-name {
  font-size: 51px;
  fill: #544a38;
  stroke: #fff;
  stroke-opacity: .85;
  stroke-width: 9;
  stroke-linejoin: round;
  paint-order: stroke;
}
.places .mid { font-size: 54px; }
.places .city { font-size: 78px; font-weight: 500; fill: #3d3320; }
.places .hood { font-size: 42px; fill: #9a8568; font-weight: 500; }
.park-names text { font-size: 56px; font-style: italic; fill: #4b8a1f; }
.road-name { font-size: 43px; fill: #845017; }

.map-types {
  position: absolute;
  top: 15px;
  left: 15px;
  display: flex;
  height: 47px;
  background: #fff;
  border-radius: 3px;
  box-shadow: 0 1px 5px rgba(0,0,0,.3);
  font-size: 16.5px;
  line-height: 47px;
  text-align: center;
}
.map-type { width: 85px; color: #565656; }
.map-type.active { width: 58px; border-right: 1px solid #e4e4e4; color: #000; font-weight: 500; }
.google-logo { position: absolute; left: 7px; bottom: 0; width: 100px; height: 38px; }
.google-logo text { font: 700 30px Lato, sans-serif; stroke: #fff; stroke-width: 2; paint-order: stroke; }
.map-controls {
  position: absolute;
  top: 425px;
  right: 15px;
  display: flex;
  flex-direction: column;
  gap: 15px;
}
.control-box {
  display: flex;
  flex-direction: column;
  align-items: center;
  width: 42px;
  background: #fff;
  border-radius: 3px;
  box-shadow: 0 1px 5px rgba(0,0,0,.3);
}
.pegman { height: 42px; padding-top: 4px; }
.zoom { height: 82px; }
.zoom hr { width: 28px; height: 1px; margin: -1px 0 0; border: 0; background: #e0e0e0; }
.map-credits {
  position: absolute;
  right: 0;
  bottom: 0;
  display: flex;
  width: 432px;
  height: 21px;
  background: rgba(245,245,245,.7);
  color: #444;
  font-size: 15px;
  line-height: 21px;
  letter-spacing: -.04px;
  white-space: nowrap;
}
.map-credits span { padding-left: 7px; }
.map-credits span:nth-child(1) { width: 182px; }
.map-credits span:nth-child(2) { width: 107px; }
.map-credits span:nth-child(3) { padding-left: 8px; border-left: 1px solid #e4e4e4; }

/* rating and comment form */
.ratings { display: flex; margin: 23px 0 15px; }
.rating { display: flex; align-items: center; gap: 12px; width: 63px; }
.rating input {
  appearance: none;
  width: 18px;
  height: 18px;
  margin: 0;
  border: 1px solid #b0b0b0;
  border-radius: 50%;
  background: linear-gradient(#eee, #dcdcdc 50%);
  box-shadow: 0 1px 1px rgba(0,0,0,.12);
}
.comment-box {
  display: block;
  width: 772px;
  height: 125px;
  margin: 0 0 30px;
  border: 1px solid #a9a9a9;
}

/* posted comments */
.comments {
  height: 375px;
  margin-top: 21px;
  border: 1px solid #bce8f1;
  border-radius: 6px;
  box-shadow: 0 1px 1px rgba(0,0,0,.05);
}
.comments-heading {
  display: flex;
  height: 61px;
  padding: 15px 22px;
  background: #d9edf7;
  border-bottom: 1px solid #bce8f1;
  border-radius: 5px 5px 0 0;
  color: #31708f;
}
.comments-heading span { width: 408px; }
.comments-table {
  width: 1140px;
  margin: 23px 0 0 22px;
  table-layout: fixed;
  border-collapse: separate;
  border-spacing: 0;
  font-size: 24px;
  line-height: 34px;
}
.col-user { width: 467px; }
.col-comment { width: 340px; }
.col-created { width: 303px; }
.comments-table th { padding: 12px; border-bottom: 3px solid #ddd; text-align: left; }
.comments-table thead td { border-bottom: 2px solid #f9f9f9; box-shadow: inset 0 -1px #ddd; }
.comments-table tbody td { height: 59px; padding: 11px 12px 13px; border-top: 1px solid #ddd; }
.comments-table tbody td:nth-child(1) { letter-spacing: .2px; }
.comments-table tbody td:nth-child(2) { letter-spacing: .05px; }
.comments-table tbody td:nth-child(3) { letter-spacing: -.17px; }
.comments-table tbody tr:first-child td { height: 58px; border-top: 0; }
.comments-table tbody tr:nth-child(odd) { background: #f9f9f9; }

.btn-back { width: 180px; margin: 30px auto 0; }
.footer {
  height: 142px;
  margin: 30px 23px 0;
  padding-top: 30px;
  border-top: 1px solid #eee;
  text-align: center;
}
```
